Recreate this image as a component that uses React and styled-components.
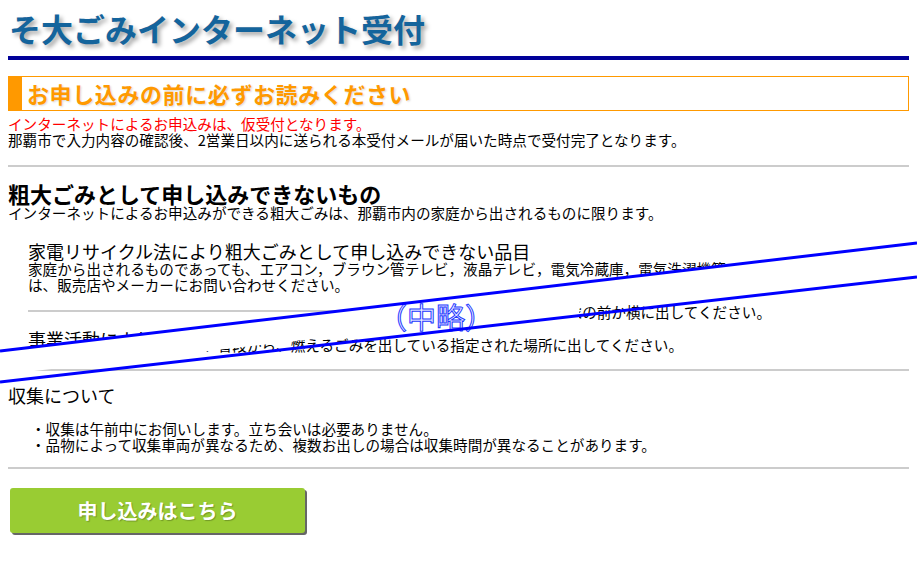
import React from 'react'
import styled, { createGlobalStyle } from 'styled-components'

const GlobalStyle = createGlobalStyle`
  body {
    margin: 0;
    background: #fff;
    color: #000;
    font-family: "Noto Sans CJK JP", "Noto Sans", sans-serif;
  }
`

const Page = styled.main`
  padding: 8px;
`

const Title = styled.h1`
  margin: 0;
  padding: 0 0 8px 1px;
  border-bottom: 4px solid #000099;
  font-size: 32px;
  line-height: 40px;
  font-weight: bold;
  color: #14649c;
  text-shadow: 3px 3px 4px rgba(0, 0, 0, 0.35);
`

const Section = styled.section`
  padding: ${p => p.$top || 0}px 0 ${p => p.$bottom || 0}px;
  border-bottom: ${p => (p.$ruled ? '2px solid #cccccc' : 'none')};
`

const NoticeHeading = styled.h2`
  margin: 16px 0 0;
  border: 1px solid #ff9900;
  border-left: 14px solid #ff9900;
  padding-left: 5px;
  font-size: 22px;
  line-height: 33px;
  font-weight: bold;
  letter-spacing: 0.6px;
  color: #ff9900;
  text-shadow: 1px 1px 2px rgba(0, 0, 0, 0.15);
`

const Heading = styled.h2`
  margin: 0;
  font-size: 22px;
  line-height: 24px;
  font-weight: bold;
`

const SubTitle = styled.h3`
  margin: 0;
  font-size: 18px;
  line-height: 20px;
  font-weight: normal;
`

const Text = styled.p`
  margin: ${p => p.$gap || 0}px 0 0;
  font-size: 14.6px;
  line-height: 16px;
  color: ${p => (p.$alert ? '#ff0000' : '#000')};
`

const CutZone = styled.div`
  position: relative;
  display: grid;
  height: 150px;
`

const Layer = styled.div`
  grid-area: 1 / 1;
  display: flex;
  flex-direction: column;
  justify-content: ${p => (p.$end ? 'flex-end' : 'flex-start')};
  background: #fff;
  clip-path: ${p => p.$clip};
`

const SubSection = styled.div`
  margin-left: 20px;
  padding: ${p => p.$top || 0}px 0 ${p => p.$bottom || 0}px;
  border-bottom: ${p => (p.$open ? 'none' : '2px solid #cccccc')};
`

const OmitLabel = styled.span`
  position: absolute;
  left: 370px;
  top: 77px;
  padding-right: 85px;
  background: #fff;
  font-size: 29px;
  line-height: 36px;
  color: #eef0ff;
  -webkit-text-stroke: 1px #2438ff;
`

const CutLines = styled.svg`
  position: absolute;
  top: 0;
  left: -8px;
  width: 917px;
  height: 170px;
  overflow: visible;
  pointer-events: none;
`

const Points = styled.ul`
  list-style: none;
  margin: 16px 0 0;
  padding: 0 0 0 23px;
  font-size: 14.6px;
  line-height: 16px;
`

const ApplyButton = styled.button`
  display: flex;
  align-items: center;
  justify-content: center;
  margin: 19px 0 0 2px;
  width: 295px;
  height: 45px;
  border: none;
  border-radius: 3px;
  background: #99cc33;
  box-shadow: 2px 2px 0 #666666;
  color: #fff;
  font-family: inherit;
  font-size: 20px;
  font-weight: bold;
  text-shadow: 1px 1px 1px rgba(0, 0, 0, 0.25);
  cursor: pointer;
`

const App = () => {
  return (
    <Page>
      <GlobalStyle />
      <Title>そ大ごみインターネット受付</Title>

      <Section $ruled $bottom={17}>
        <NoticeHeading>お申し込みの前に必ずお読みください</NoticeHeading>
        <Text $gap={5} $alert>インターネットによるお申込みは、仮受付となります。</Text>
        <Text>那覇市で入力内容の確認後、2営業日以内に送られる本受付メールが届いた時点で受付完了となります。</Text>
      </Section>

      <Section $top={14}>
        <Heading>粗大ごみとして申し込みできないもの</Heading>
        <Text>インターネットによるお申込みができる粗大ごみは、那覇市内の家庭から出されるものに限ります。</Text>

        <CutZone>
          <Layer $end $clip="polygon(0 153px, 100% 49.5px, 100% 100%, 0 100%)">
            <SubSection $bottom={16}>
              <Text>戸建住宅にお住まいの方は、収集日当日の朝８時３０分までに、必ず道路に面した家の前か横に出してください。</Text>
              <Text $gap={17}>集合住宅にお住まいの方は、普段から、燃えるごみを出している指定された場所に出してください。</Text>
            </SubSection>
          </Layer>

          <Layer $clip="polygon(0 0, 100% 0, 100% 23px, 0 129px)">
            <SubSection $top={20} $bottom={17}>
              <SubTitle>家電リサイクル法により粗大ごみとして申し込みできない品目</SubTitle>
              <Text>
                家庭から出されるものであっても、エアコン，ブラウン管テレビ，液晶テレビ，電気冷蔵庫，電気洗濯機等の処分について
                <br />
                は、販売店やメーカーにお問い合わせください。
              </Text>
            </SubSection>
            <SubSection $open $top={17}>
              <SubTitle>事業活動により出されるごみ</SubTitle>
              <Text>事業所から出されるごみは粗大ごみとして申し込みできません。</Text>
            </SubSection>
          </Layer>

          <OmitLabel>（中略）</OmitLabel>

          <CutLines viewBox="0 0 917 170">
            <line x1="0" y1="130" x2="917" y2="22" stroke="#0000ff" strokeWidth="3" />
            <line x1="0" y1="161" x2="917" y2="56" stroke="#0000ff" strokeWidth="3" />
          </CutLines>
        </CutZone>
      </Section>

      <Section $ruled $top={14} $bottom={14}>
        <SubTitle>収集について</SubTitle>
        <Points>
          <li>・収集は午前中にお伺いします。立ち会いは必要ありません。</li>
          <li>・品物によって収集車両が異なるため、複数お出しの場合は収集時間が異なることがあります。</li>
        </Points>
      </Section>

      <ApplyButton type="button">申し込みはこちら</ApplyButton>
    </Page>
  )
}

export default App
